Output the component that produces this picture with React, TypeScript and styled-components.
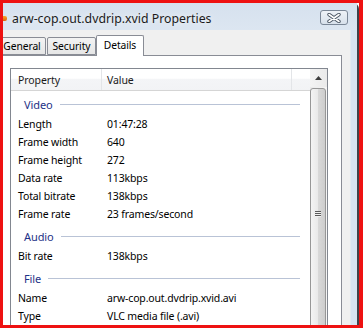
import React from 'react';
import styled, { createGlobalStyle } from 'styled-components';

const Global = createGlobalStyle`
  html, body { margin: 0; padding: 0; background: #ffffff; }
  body { font-family: "Noto Sans", "Open Sans", sans-serif; color: #000; }
  * { box-sizing: border-box; }
`;

const Frame = styled.div`
  width: 363px;
  height: 328px;
  border-style: solid;
  border-color: #ee1111;
  border-width: 3px 4px 3px 3px;
  overflow: hidden;
  display: flex;
`;

const Window = styled.div`
  flex: 1;
  min-width: 0;
  display: flex;
  flex-direction: column;
  background: #d9e4f1;
  border-right: 2px solid #3d434b;
  border-top-right-radius: 6px;
`;

const TitleBar = styled.div`
  height: 27px;
  flex: none;
  display: flex;
  align-items: center;
  padding-top: 4px;
  background: linear-gradient(#d6e1ee, #dce6f1);
`;

const AppIcon = styled.span`
  width: 4px;
  height: 5px;
  margin-right: 5px;
  border-radius: 0 2px 2px 0;
  background: linear-gradient(#f7a42a, #e0620c);
`;

const Title = styled.span`
  flex: 1;
  font-size: 12.3px;
  color: #1b1b1b;
  text-shadow: 0 0 6px rgba(255, 255, 255, 0.9);
  white-space: nowrap;
`;

const CloseButton = styled.div`
  align-self: flex-start;
  margin: 3px 9px 0 0;
  width: 28px;
  height: 15px;
  border: 1px solid #7b8797;
  border-radius: 3px;
  background: linear-gradient(#eef2f7, #d8e1eb);
  display: flex;
  align-items: center;
  justify-content: center;
`;

const Body = styled.div`
  flex: 1;
  min-height: 0;
  display: flex;
`;

const Client = styled.div`
  flex: 1;
  min-width: 0;
  display: flex;
  flex-direction: column;
  background: #f0f0f0;
  padding: 5px 8px 0 0;
`;

const FrameEdge = styled.div`
  width: 7px;
  flex: none;
  background: #d6e2f0;
  border-left: 1px solid #e2e8ef;
`;

const TabArea = styled.div`
  flex: 1;
  min-height: 0;
  margin-left: -5px;
  display: flex;
  flex-direction: column;
`;

const TabStrip = styled.div`
  height: 20px;
  flex: none;
  display: flex;
  align-items: flex-end;
`;

const Tab = styled.div<{ $w: number; $active?: boolean }>`
  width: ${(p) => p.$w}px;
  height: ${(p) => (p.$active ? 21 : 18)}px;
  margin-right: ${(p) => (p.$active ? 0 : 1)}px;
  margin-left: ${(p) => (p.$active ? -1 : 0)}px;
  margin-bottom: ${(p) => (p.$active ? -1 : 0)}px;
  position: relative;
  z-index: ${(p) => (p.$active ? 1 : 0)};
  border: 1px solid #898c95;
  border-bottom: ${(p) => (p.$active ? 'none' : '1px solid #898c95')};
  border-radius: 2px 2px 0 0;
  background: ${(p) => (p.$active ? '#ffffff' : 'linear-gradient(#f3f3f3, #e6e6e6)')};
  font-size: 10.3px;
  letter-spacing: -0.1px;
  color: #000;
  display: flex;
  align-items: center;
  justify-content: center;
  padding-bottom: ${(p) => (p.$active ? 2 : 0)}px;
  white-space: nowrap;
`;

const TabPage = styled.div`
  flex: 1;
  min-height: 0;
  display: flex;
  border: 1px solid #898c95;
  border-bottom: none;
  background: #ffffff;
  padding: 12px 13px 0 11px;
`;

const ListView = styled.div`
  flex: 1;
  min-width: 0;
  display: flex;
  border: 1px solid #828790;
  border-bottom: none;
  overflow: hidden;
`;

const List = styled.div`
  flex: 1;
  min-width: 0;
  display: flex;
  flex-direction: column;
`;

const Header = styled.div`
  height: 22px;
  flex: none;
  display: grid;
  grid-template-columns: 91px 190px 1fr;
  background: linear-gradient(#ffffff 0%, #ffffff 45%, #f4f5f7 46%, #f2f3f5 100%);
  border-bottom: 1px solid #d5d5d5;
`;

const HeaderCell = styled.div<{ $pad: number; $divider?: boolean }>`
  padding-left: ${(p) => p.$pad}px;
  border-right: ${(p) => (p.$divider ? '1px solid #e3e5e8' : 'none')};
  font-size: 10.5px;
  letter-spacing: -0.1px;
  color: #1a1a1a;
  display: flex;
  align-items: center;
`;

const Group = styled.div`
  height: 24px;
  flex: none;
  display: flex;
  align-items: center;
  padding: 2px 10px 0 13px;
`;

const GroupLabel = styled.span`
  font-size: 11px;
  letter-spacing: -0.1px;
  color: #1e3287;
`;

const GroupLine = styled.span`
  flex: 1;
  height: 1px;
  margin-left: 7px;
  background: #b9c3d6;
`;

const Row = styled.div`
  height: 18px;
  flex: none;
  display: grid;
  grid-template-columns: 91px 1fr;
  font-size: 10.5px;
  letter-spacing: -0.15px;
  line-height: 18px;
  color: #000;
  white-space: nowrap;
`;

const Cell = styled.span<{ $pad: number }>`
  padding-left: ${(p) => p.$pad}px;
  overflow: hidden;
`;

const ScrollBar = styled.div`
  width: 17px;
  flex: none;
  display: flex;
  flex-direction: column;
  background: linear-gradient(to right, #e9e9e9, #f5f5f5);
`;

const ScrollButton = styled.div`
  height: 18px;
  flex: none;
  display: flex;
  align-items: center;
  justify-content: center;
  background: linear-gradient(to right, #f3f3f3, #eaeaea);
`;

const Thumb = styled.div`
  height: 250px;
  flex: none;
  margin: 1px 1px 0 0;
  border: 1px solid #979797;
  border-radius: 3px;
  background: linear-gradient(to right, #f4f4f4 0%, #e9e9e9 50%, #d9d9d9 51%, #cdcdcd 100%);
  display: flex;
  align-items: center;
  justify-content: center;
`;

const Grip = styled.div`
  width: 6px;
  display: flex;
  flex-direction: column;
  gap: 1px;
`;

const GripLine = styled.span`
  height: 1px;
  background: #5a5a5a;
  box-shadow: 0 1px 0 #f0f0f0;
`;

type Item = { kind: 'group'; label: string } | { kind: 'row'; name: string; value: string };

const items: Item[] = [
  { kind: 'group', label: 'Video' },
  { kind: 'row', name: 'Length', value: '01:47:28' },
  { kind: 'row', name: 'Frame width', value: '640' },
  { kind: 'row', name: 'Frame height', value: '272' },
  { kind: 'row', name: 'Data rate', value: '113kbps' },
  { kind: 'row', name: 'Total bitrate', value: '138kbps' },
  { kind: 'row', name: 'Frame rate', value: '23 frames/second' },
  { kind: 'group', label: 'Audio' },
  { kind: 'row', name: 'Bit rate', value: '138kbps' },
  { kind: 'group', label: 'File' },
  { kind: 'row', name: 'Name', value: 'arw-cop.out.dvdrip.xvid.avi' },
  { kind: 'row', name: 'Type', value: 'VLC media file (.avi)' },
];

export default function App() {
  return (
    <>
      <Global />
      <Frame>
        <Window>
          <TitleBar>
            <AppIcon />
            <Title>arw-cop.out.dvdrip.xvid Properties</Title>
            <CloseButton>
              <svg width="14" height="10" viewBox="0 0 14 10">
                <path d="M2 1.5 L12 8.5 M12 1.5 L2 8.5" stroke="#4a5563" strokeWidth="3.4" strokeLinecap="round" fill="none" />
                <path d="M2 1.5 L12 8.5 M12 1.5 L2 8.5" stroke="#ffffff" strokeWidth="1.6" strokeLinecap="round" fill="none" />
              </svg>
            </CloseButton>
          </TitleBar>
          <Body>
            <Client>
              <TabArea>
                <TabStrip>
                  <Tab $w={48}>General</Tab>
                  <Tab $w={49}>Security</Tab>
                  <Tab $w={48} $active>Details</Tab>
                </TabStrip>
                <TabPage>
                  <ListView>
                    <List>
                      <Header>
                        <HeaderCell $pad={7} $divider>Property</HeaderCell>
                        <HeaderCell $pad={5} $divider>Value</HeaderCell>
                        <HeaderCell $pad={0} />
                      </Header>
                      {items.map((it, i) =>
                        it.kind === 'group' ? (
                          <Group key={i}>
                            <GroupLabel>{it.label}</GroupLabel>
                            <GroupLine />
                          </Group>
                        ) : (
                          <Row key={i}>
                            <Cell $pad={7}>{it.name}</Cell>
                            <Cell $pad={5}>{it.value}</Cell>
                          </Row>
                        )
                      )}
                    </List>
                    <ScrollBar>
                      <ScrollButton>
                        <svg width="7" height="4" viewBox="0 0 7 4">
                          <path d="M0 4 L3.5 0 L7 4 Z" fill="#3c3c3c" />
                        </svg>
                      </ScrollButton>
                      <Thumb>
                        <Grip>
                          <GripLine />
                          <GripLine />
                          <GripLine />
                        </Grip>
                      </Thumb>
                    </ScrollBar>
                  </ListView>
                </TabPage>
              </TabArea>
            </Client>
            <FrameEdge />
          </Body>
        </Window>
      </Frame>
    </>
  );
}
